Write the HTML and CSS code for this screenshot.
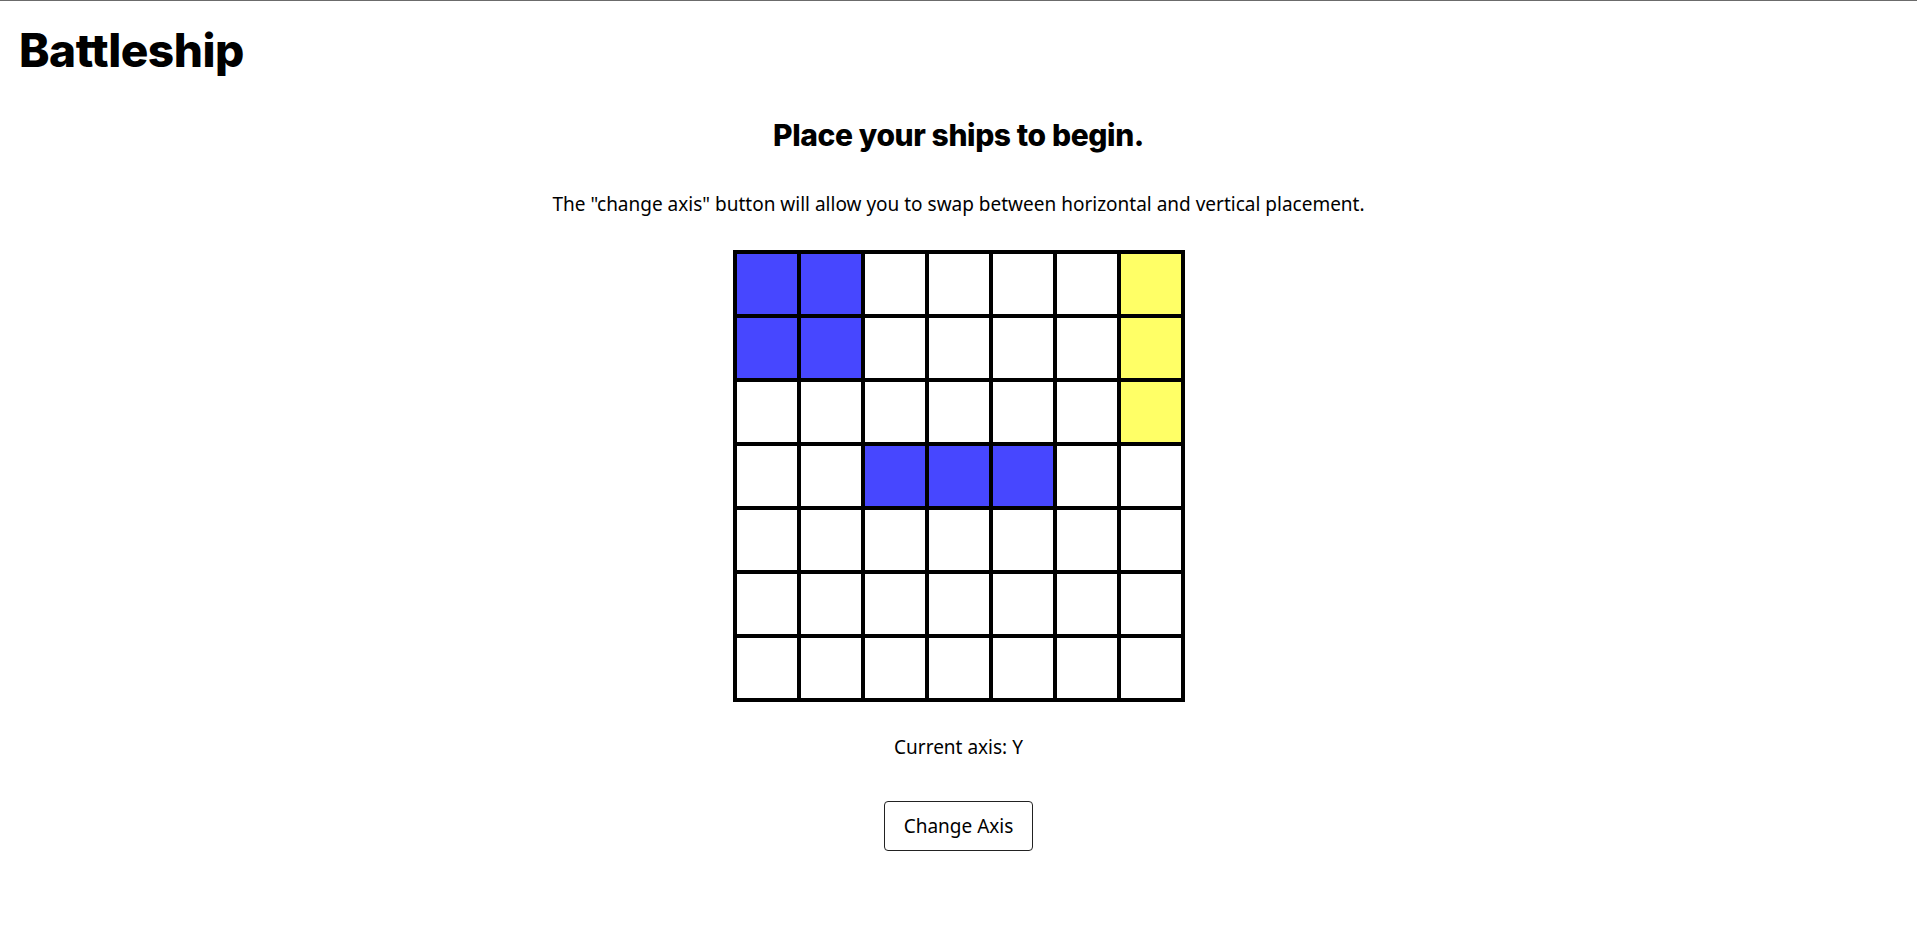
FILE: index.html
```html
<!DOCTYPE html>
<html lang="en">
<head>
<meta charset="utf-8">
<title>Battleship</title>
<link rel="stylesheet" href="styles.css">
</head>
<body>
<header class="header">
  <h1 class="logo">Battleship</h1>
</header>
<main class="setup">
  <h2 class="prompt">Place your ships to begin.</h2>
  <p class="hint">The "change axis" button will allow you to swap between horizontal and vertical placement.</p>
  <div class="board">
    <div class="cell ship"></div><div class="cell ship"></div><div class="cell"></div><div class="cell"></div><div class="cell"></div><div class="cell"></div><div class="cell preview"></div>
    <div class="cell ship"></div><div class="cell ship"></div><div class="cell"></div><div class="cell"></div><div class="cell"></div><div class="cell"></div><div class="cell preview"></div>
    <div class="cell"></div><div class="cell"></div><div class="cell"></div><div class="cell"></div><div class="cell"></div><div class="cell"></div><div class="cell preview"></div>
    <div class="cell"></div><div class="cell"></div><div class="cell ship"></div><div class="cell ship"></div><div class="cell ship"></div><div class="cell"></div><div class="cell"></div>
    <div class="cell"></div><div class="cell"></div><div class="cell"></div><div class="cell"></div><div class="cell"></div><div class="cell"></div><div class="cell"></div>
    <div class="cell"></div><div class="cell"></div><div class="cell"></div><div class="cell"></div><div class="cell"></div><div class="cell"></div><div class="cell"></div>
    <div class="cell"></div><div class="cell"></div><div class="cell"></div><div class="cell"></div><div class="cell"></div><div class="cell"></div><div class="cell"></div>
  </div>
  <p class="axis">Current axis: Y</p>
  <button class="axis-btn" type="button">Change Axis</button>
</main>
</body>
</html>
```
FILE: styles.css
```css
html, body {
  margin: 0;
  padding: 0;
  background: #ffffff;
  color: #000000;
}
body {
  border-top: 1px solid #6b6b6b;
  font-family: "Noto Sans", "Open Sans", sans-serif;
}
.header {
  padding: 0 0 0 19px;
}
.logo {
  margin: 0;
  padding-top: 22px;
  font-family: Inter, "Lato", sans-serif;
  font-weight: 800;
  font-size: 46px;
  line-height: 54px;
  letter-spacing: -0.5px;
}
.setup {
  display: flex;
  flex-direction: column;
  align-items: center;
}
.prompt {
  margin: 40px 0 0 0;
  font-family: Inter, "Lato", sans-serif;
  font-weight: 800;
  font-size: 30px;
  line-height: 36px;
  letter-spacing: -0.4px;
}
.hint {
  margin: 38px 0 0 0;
  font-size: 19px;
  line-height: 26px;
}
.board {
  margin-top: 33px;
  display: grid;
  grid-template-columns: repeat(7, 60px);
  grid-auto-rows: 60px;
  gap: 4px;
  padding: 4px;
  background: #000000;
}
.cell {
  background: #ffffff;
}
.cell.ship {
  background: #4747ff;
}
.cell.preview {
  background: #ffff66;
}
.axis {
  margin: 32px 0 0 0;
  font-size: 19px;
  line-height: 26px;
}
.axis-btn {
  margin-top: 41px;
  width: 149px;
  height: 50px;
  border: 1px solid #222222;
  border-radius: 4px;
  background: #ffffff;
  color: #000000;
  font-family: "Noto Sans", "Open Sans", sans-serif;
  font-size: 19px;
  padding: 0;
  cursor: pointer;
}
```
